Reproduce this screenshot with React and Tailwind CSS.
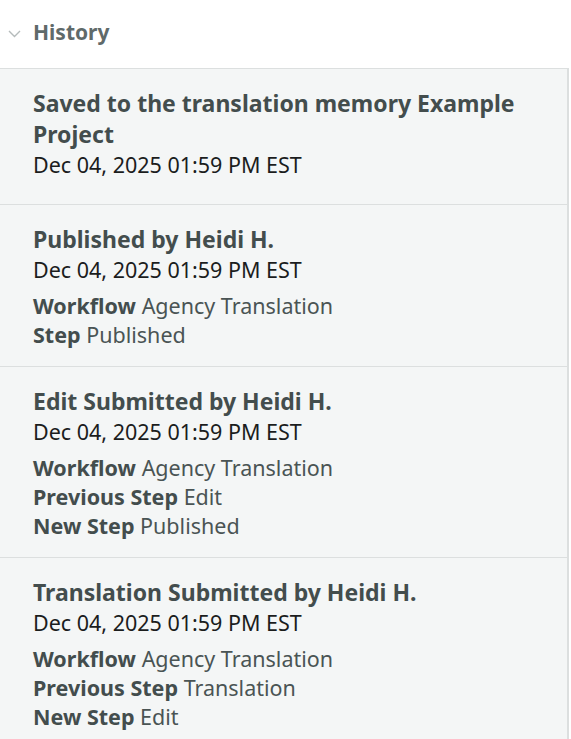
import React from "react";

const entries = [
  {
    title: "Saved to the translation memory Example Project",
    date: "Dec 04, 2025 01:59 PM EST",
    details: [],
  },
  {
    title: "Published by Heidi H.",
    date: "Dec 04, 2025 01:59 PM EST",
    details: [
      ["Workflow", "Agency Translation"],
      ["Step", "Published"],
    ],
  },
  {
    title: "Edit Submitted by Heidi H.",
    date: "Dec 04, 2025 01:59 PM EST",
    details: [
      ["Workflow", "Agency Translation"],
      ["Previous Step", "Edit"],
      ["New Step", "Published"],
    ],
  },
  {
    title: "Translation Submitted by Heidi H.",
    date: "Dec 04, 2025 01:59 PM EST",
    details: [
      ["Workflow", "Agency Translation"],
      ["Previous Step", "Translation"],
      ["New Step", "Edit"],
    ],
  },
];

const HistoryEntry = ({ entry }) => (
  <div
    className={`border-b border-[#dcdfdf] pl-[33px] pr-4 ${
      entry.details.length ? "pt-[19px] pb-[17px]" : "pt-[19px] pb-[24px]"
    }`}
  >
    <div className="text-[23px] leading-[31px] font-bold text-[#434d4d]">{entry.title}</div>
    <div className="text-[21.5px] leading-[30px] text-[#1b1d1d]">{entry.date}</div>
    {entry.details.length > 0 && (
      <div className="mt-[6px]">
        {entry.details.map(([label, value]) => (
          <div key={label} className="text-[21.5px] leading-[29px] text-[#4a5454]">
            <span className="font-bold text-[#434d4d]">{label}</span> {value}
          </div>
        ))}
      </div>
    )}
  </div>
);

export default function App() {
  return (
    <div className="w-[571px] h-[739px] overflow-hidden bg-white font-['Noto_Sans',sans-serif]">
      <div className="flex items-center h-[68px] pl-[8px] pb-[2px] gap-[12px]">
        <svg width="13" height="8" viewBox="0 0 13 8" className="mt-[2px]">
          <path d="M1 1 L6.5 6.5 L12 1" fill="none" stroke="#b5bbbb" strokeWidth="1.4" />
        </svg>
        <span className="text-[21px] font-bold text-[#5f6a6a]">History</span>
      </div>
      <div className="w-[569px] bg-[#f4f6f6] border-t border-r-2 border-[#dcdfdf] min-h-[680px]">
        {entries.map((entry, i) => (
          <HistoryEntry key={i} entry={entry} />
        ))}
      </div>
    </div>
  );
}
